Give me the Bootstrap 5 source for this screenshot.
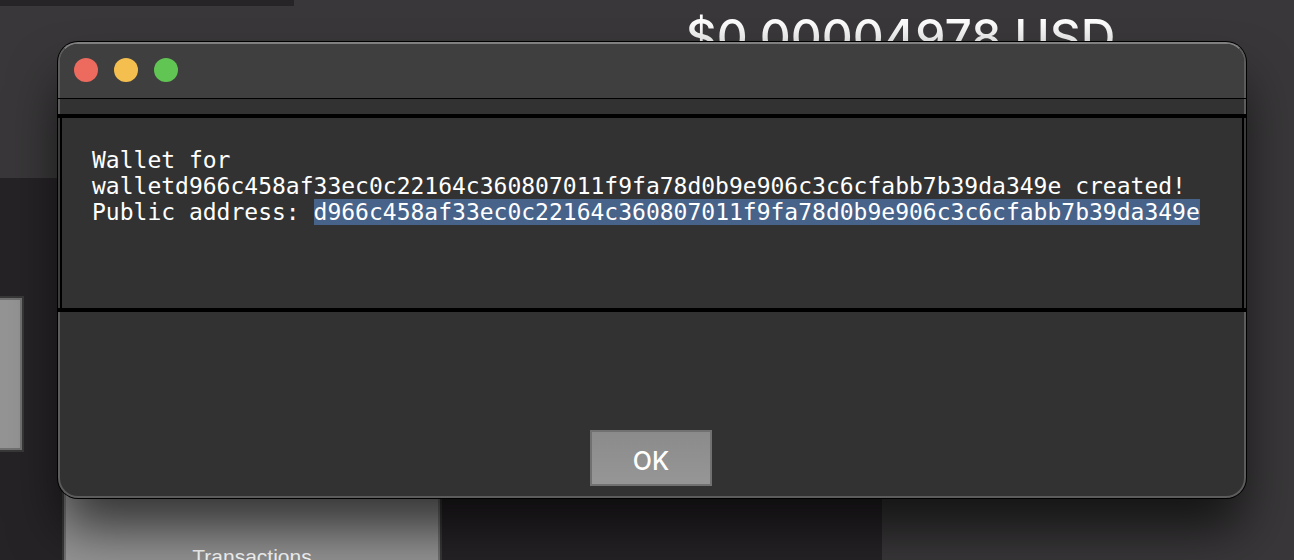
<!DOCTYPE html>
<html lang="en">
<head>
<meta charset="utf-8">
<meta name="viewport" content="width=device-width, initial-scale=1">
<title>Wallet</title>
<link href="https://cdn.jsdelivr.net/npm/bootstrap@5.3.0/dist/css/bootstrap.min.css" rel="stylesheet">
<style>
body { font-family: Inter, "Liberation Sans", sans-serif; background: #393739; color: #fff; }
.wallet-app { height: 100vh; }
.top-strip { width: 294px; height: 6px; background: #262426; }
.top-area { height: 178px; }
.price { left: 53%; top: 5px; font-size: 48px; line-height: 64px; font-weight: 500; background: linear-gradient(#fff 20%, #dedede 70%); -webkit-background-clip: text; background-clip: text; color: transparent; }
.side-panel { width: 882px; background: #262326; padding-top: 120px; }
.tile { background: #949494; border: 2px solid #707070; border-radius: 0; color: #fff; outline: 2px solid #383838; }
.tile-cut { width: 22px; height: 152px; border-left: 0; }
.tile-tx { width: 376px; height: 166px; margin-left: 64px; font: 21px/26px "Liberation Sans", sans-serif; }
.dialog-window {
  top: 42px; left: 58px; right: 48px;
  background: #323232; border: 2px solid #5c5c5c; border-top-color: #808080; border-radius: 20px;
  box-shadow: 0 0 0 1px #000, 0 34px 52px -4px rgba(0,0,0,.65);
}
.title-bar { height: 54px; padding: 0 14px 2px; gap: 16px; background: #3f3f3f; border-radius: 18px 18px 0 0; }
.light { width: 24px; height: 24px; border: 0; border-radius: 50%; }
.light-close { background: #ed6a5e; }
.light-min { background: #f5bf4f; }
.light-zoom { background: #61c554; }
.divider { height: 1px; margin: 0 -2px 15px; background: #000; }
.message {
  height: 198px; margin: 0 -2px; padding: 29px 34px;
  border: solid #000; border-width: 4px 0;
  box-shadow: inset 2px 0 #3c3c3c, inset -2px 0 #3c3c3c, inset 4px 0 #000, inset -4px 0 #000;
  font: 23px/26px "DejaVu Sans Mono", monospace;
}
.picked { background: #47638a; }
.actions { padding: 118px 2px 10px 0; }
.ok-btn { width: 122px; height: 56px; padding: 6px 0 0; border: 2px solid #717171; border-radius: 0; background: linear-gradient(#8b8b8b, #969696); color: #fff; font-size: 25px; line-height: 32px; font-weight: 500; }
</style>
</head>
<body>
<div class="wallet-app position-relative overflow-hidden d-flex flex-column">
  <header class="top-area flex-shrink-0">
    <div class="top-strip"></div>
    <h1 class="price position-absolute m-0 text-nowrap">$0.00004978 USD</h1>
  </header>
  <main class="side-panel flex-grow-1 d-flex flex-column align-items-start gap-4">
    <button class="tile tile-cut flex-shrink-0 p-0" type="button" aria-label="Wallets"></button>
    <button class="tile tile-tx flex-shrink-0 p-0" type="button">Transactions</button>
  </main>

  <section class="dialog-window position-absolute" role="dialog" aria-label="Wallet created">
    <div class="title-bar d-flex align-items-center">
      <button class="light light-close p-0" type="button" aria-label="Close"></button>
      <button class="light light-min p-0" type="button" aria-label="Minimize"></button>
      <button class="light light-zoom p-0" type="button" aria-label="Zoom"></button>
    </div>
    <div class="divider"></div>
    <p class="message text-nowrap">Wallet for<br>walletd966c458af33ec0c22164c360807011f9fa78d0b9e906c3c6cfabb7b39da349e created!<br>Public address: <span class="picked">d966c458af33ec0c22164c360807011f9fa78d0b9e906c3c6cfabb7b39da349e</span></p>
    <div class="actions d-flex justify-content-center">
      <button class="ok-btn" type="button">OK</button>
    </div>
  </section>
</div>
<script src="https://cdn.jsdelivr.net/npm/bootstrap@5.3.0/dist/js/bootstrap.bundle.min.js"></script>
</body>
</html>
